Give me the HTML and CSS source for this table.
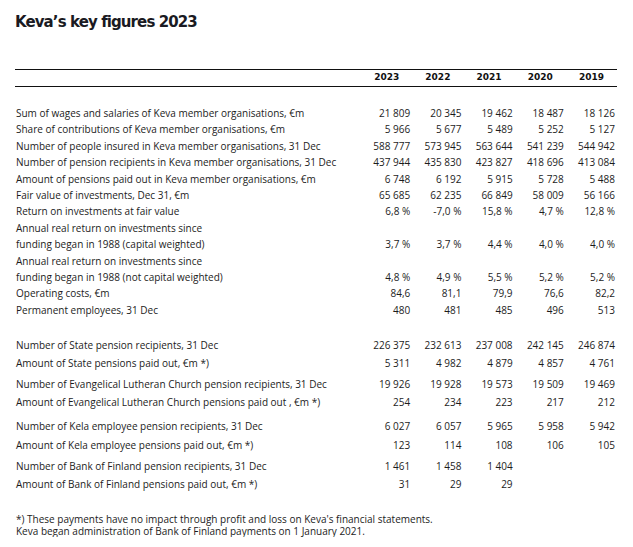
FILE: index.html
```html
<!DOCTYPE html>
<html lang="en">
<head>
<meta charset="utf-8">
<title>Keva’s key figures 2023</title>
<link rel="stylesheet" href="styles.css">
</head>
<body>
<div class="page">
  <h1 class="title">Keva’s key figures 2023</h1>
  <table class="figures">
    <colgroup>
      <col class="c-label">
      <col class="c-val"><col class="c-val"><col class="c-val"><col class="c-val"><col class="c-val">
    </colgroup>
    <thead>
      <tr class="head">
        <th></th><th>2023</th><th>2022</th><th>2021</th><th>2020</th><th>2019</th>
      </tr>
    </thead>
    <tbody class="main">
      <tr class="spacer s-top"><td colspan="6"></td></tr>
      <tr><td>Sum of wages and salaries of Keva member organisations, €m</td><td>21 809</td><td>20 345</td><td>19 462</td><td>18 487</td><td>18 126</td></tr>
      <tr><td>Share of contributions of Keva member organisations, €m</td><td>5 966</td><td>5 677</td><td>5 489</td><td>5 252</td><td>5 127</td></tr>
      <tr><td>Number of people insured in Keva member organisations, 31 Dec</td><td>588 777</td><td>573 945</td><td>563 644</td><td>541 239</td><td>544 942</td></tr>
      <tr><td>Number of pension recipients in Keva member organisations, 31 Dec</td><td>437 944</td><td>435 830</td><td>423 827</td><td>418 696</td><td>413 084</td></tr>
      <tr><td>Amount of pensions paid out in Keva member organisations, €m</td><td>6 748</td><td>6 192</td><td>5 915</td><td>5 728</td><td>5 488</td></tr>
      <tr><td>Fair value of investments, Dec 31, €m</td><td>65 685</td><td>62 235</td><td>66 849</td><td>58 009</td><td>56 166</td></tr>
      <tr><td>Return on investments at fair value</td><td>6,8 %</td><td>-7,0 %</td><td>15,8 %</td><td>4,7 %</td><td>12,8 %</td></tr>
      <tr><td>Annual real return on investments since<br>funding began in 1988 (capital weighted)</td><td>3,7 %</td><td>3,7 %</td><td>4,4 %</td><td>4,0 %</td><td>4,0 %</td></tr>
      <tr><td>Annual real return on investments since<br>funding began in 1988 (not capital weighted)</td><td>4,8 %</td><td>4,9 %</td><td>5,5 %</td><td>5,2 %</td><td>5,2 %</td></tr>
      <tr><td>Operating costs, €m</td><td>84,6</td><td>81,1</td><td>79,9</td><td>76,6</td><td>82,2</td></tr>
      <tr><td>Permanent employees, 31 Dec</td><td>480</td><td>481</td><td>485</td><td>496</td><td>513</td></tr>
    </tbody>
    <tbody class="other">
      <tr class="spacer s-section"><td colspan="6"></td></tr>
      <tr><td>Number of State pension recipients, 31 Dec</td><td>226 375</td><td>232 613</td><td>237 008</td><td>242 145</td><td>246 874</td></tr>
      <tr><td>Amount of State pensions paid out, €m *)</td><td>5 311</td><td>4 982</td><td>4 879</td><td>4 857</td><td>4 761</td></tr>
      <tr class="spacer s-group"><td colspan="6"></td></tr>
      <tr><td>Number of Evangelical Lutheran Church pension recipients, 31 Dec</td><td>19 926</td><td>19 928</td><td>19 573</td><td>19 509</td><td>19 469</td></tr>
      <tr><td>Amount of Evangelical Lutheran Church pensions paid out , €m *)</td><td>254</td><td>234</td><td>223</td><td>217</td><td>212</td></tr>
      <tr class="spacer s-group-wide"><td colspan="6"></td></tr>
      <tr><td>Number of Kela employee pension recipients, 31 Dec</td><td>6 027</td><td>6 057</td><td>5 965</td><td>5 958</td><td>5 942</td></tr>
      <tr><td>Amount of Kela employee pensions paid out, €m *)</td><td>123</td><td>114</td><td>108</td><td>106</td><td>105</td></tr>
      <tr class="spacer s-group"><td colspan="6"></td></tr>
      <tr><td>Number of Bank of Finland pension recipients, 31 Dec</td><td>1 461</td><td>1 458</td><td>1 404</td><td></td><td></td></tr>
      <tr><td>Amount of Bank of Finland pensions paid out, €m *)</td><td>31</td><td>29</td><td>29</td><td></td><td></td></tr>
    </tbody>
  </table>
  <div class="footnote">
    <p class="note-line">*) These payments have no impact through profit and loss on Keva's financial statements.</p>
    <p class="note-line">Keva began administration of Bank of Finland payments on 1 January 2021.</p>
  </div>
</div>
</body>
</html>
```
FILE: styles.css
```css
html, body {
  margin: 0;
  padding: 0;
  background: #ffffff;
}

.page {
  padding: 12px 16px 0 15px;
  color: #1c1c1c;
  font-family: "Open Sans", "Noto Sans", sans-serif;
}

.title {
  margin: 0;
  font-family: "DejaVu Sans", Verdana, sans-serif;
  font-weight: bold;
  font-size: 15px;
  line-height: 20px;
  letter-spacing: -0.9px;
  color: #1a1a22;
}

.figures {
  margin-top: 37px;
  width: 602px;
  table-layout: fixed;
  border-collapse: collapse;
  font-size: 10px;
}

.c-label { width: 346px; }
.c-val { width: 51.2px; }

.figures td {
  padding: 0;
  white-space: nowrap;
  vertical-align: bottom;
}

.figures td:first-child {
  padding-left: 1px;
  text-align: left;
}

.figures td + td {
  text-align: right;
  padding-right: 2px;
}

.head th {
  border-top: 1px solid #111;
  border-bottom: 1px solid #111;
  padding: 0 13px 2px 0;
  height: 14px;
  line-height: 14px;
  text-align: right;
  font-family: "DejaVu Sans", Verdana, sans-serif;
  font-weight: bold;
  font-size: 9px;
  color: #111;
}

.main td { line-height: 16.4px; }
.other td { line-height: 18.3px; }

.spacer td { line-height: 0; padding: 0; }
.s-top td { height: 18px; }
.s-section td { height: 17.5px; }
.s-group td { height: 2.7px; }
.s-group-wide td { height: 5.8px; }

.footnote {
  margin: 20.7px 0 0 1px;
  font-size: 10px;
  color: #1c1c1c;
}

.note-line {
  margin: 0;
  height: 11.7px;
  line-height: 11.7px;
  white-space: nowrap;
}
```
